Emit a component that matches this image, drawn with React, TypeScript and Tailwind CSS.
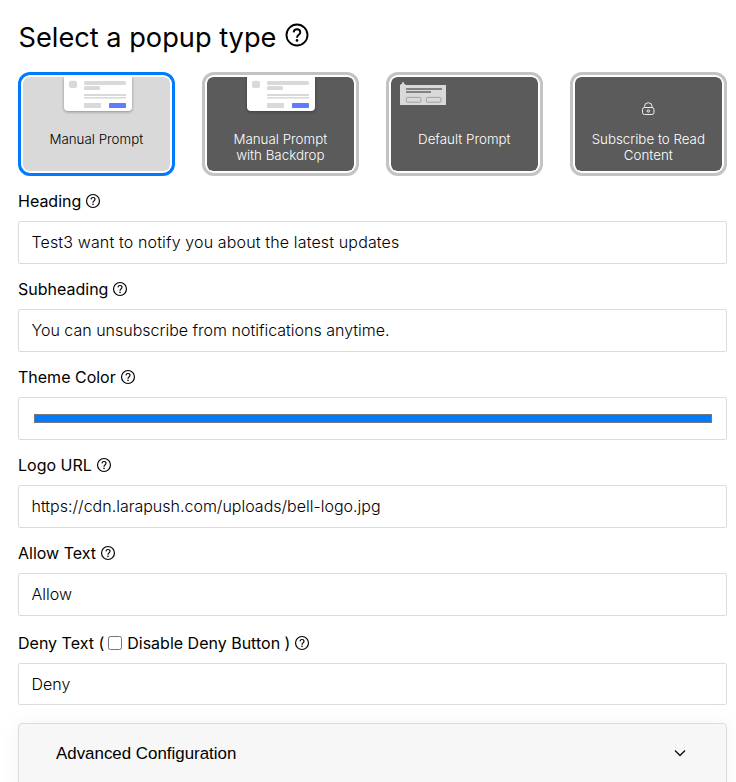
import type { ReactNode } from "react";

function HelpIcon({ className }: { className: string }) {
  return (
    <svg viewBox="0 0 24 24" className={className} fill="none" stroke="currentColor" strokeWidth="1.75">
      <circle cx="12" cy="12" r="9.7" />
      <path d="M8.9 9.6C9.1 7.7 10.3 6.7 12 6.7c1.8 0 3 1.1 3 2.7 0 2.4-3 2.5-3 5.2" />
      <circle cx="12" cy="17" r="1.2" fill="currentColor" stroke="none" />
    </svg>
  );
}

function MiniPopup({ x }: { x: number }) {
  return (
    <g transform={`translate(${x} 0)`}>
      <path d="M0 0h68v30a4 4 0 0 1-4 4H4a4 4 0 0 1-4-4z" fill="#fff" style={{ filter: "drop-shadow(0 1px 1.5px rgba(0,0,0,.35))" }} />
      <g fill="#d9d9d9">
        <rect x="5" y="3.7" width="8" height="7.3" rx="2" />
        <rect x="20" y="4" width="42" height="4" rx="1.5" />
        <rect x="20" y="9" width="16" height="4" rx="1.5" />
        <rect x="20" y="17" width="42" height="2" />
        <rect x="20" y="20" width="42" height="1.6" />
        <rect x="20" y="26" width="17" height="5" rx="0.7" />
      </g>
      <rect x="45" y="26" width="17" height="5" rx="0.7" fill="#617bff" />
    </g>
  );
}

function PromptCard({ lines, selected, children }: { lines: string[]; selected?: boolean; children: ReactNode }) {
  return (
    <button className={`h-[104px] w-[157px] rounded-[12px] border-[3px] bg-white p-[2px] ${selected ? "border-[#007bff]" : "border-[#c3c3c3]"}`}>
      <svg viewBox="0 0 147 94" className="block h-[94px] w-[147px] rounded-[6px]">
        <rect width="147" height="94" rx="6" fill={selected ? "#d9d9d9" : "#5b5b5b"} />
        {children}
        {lines.map((line, i) => (
          <text key={line} x="73.3" y={66.5 + i * 16} textAnchor="middle" className="text-[13.35px] font-light" fill={selected ? "#000" : "#fff"}>
            {line}
          </text>
        ))}
      </svg>
    </button>
  );
}

function Label({ children }: { children: ReactNode }) {
  return (
    <label className="flex h-6 items-center text-[16px] text-[#000]">
      {children}
      <HelpIcon className="ml-[4px] size-4" />
    </label>
  );
}

function Field({ label, value, tracking = "" }: { label: string; value: string; tracking?: string }) {
  return (
    <div className="flex h-[88px] flex-col gap-2">
      <Label>{label}</Label>
      <input className={`h-[43px] w-full rounded-[2px] border border-[#dcdcdc] bg-white px-[12.5px] pb-[2px] text-[16px] font-light text-[#000] outline-none ${tracking}`} defaultValue={value} />
    </div>
  );
}

export default function App() {
  return (
    <main className="h-[782px] overflow-hidden bg-white pr-[9px] pl-[18px] font-['Inter',sans-serif]">
      <h1 className="flex h-[72px] items-center pt-[5px] pl-[0.5px] text-[27.2px] text-[#000]">
        Select a popup type
        <HelpIcon className="mb-[7px] ml-[7.5px] size-[26px]" />
      </h1>
      <div className="mb-[13px] flex justify-between">
        <PromptCard lines={["Manual Prompt"]} selected>
          <MiniPopup x={41} />
        </PromptCard>
        <PromptCard lines={["Manual Prompt", "with Backdrop"]}>
          <MiniPopup x={40} />
        </PromptCard>
        <PromptCard lines={["Default Prompt"]}>
          <path d="M9 28V8l1.5 -1 1.5-2.5 1.5 2.5 1.5 1h40v20z" fill="#d9d9d9" />
          <path d="M15 12h36M15 15h25" stroke="#666" strokeWidth="1.7" />
          <g fill="none" stroke="#929292" strokeWidth="0.8">
            <rect x="15.4" y="20.4" width="14.5" height="4.8" rx="1" />
            <rect x="35.4" y="20.4" width="14.5" height="4.8" rx="1" />
          </g>
        </PromptCard>
        <PromptCard lines={["Subscribe to Read", "Content"]}>
          <g fill="none" stroke="#eee" strokeWidth="1">
            <rect x="67.5" y="30.5" width="11.5" height="7" rx="2" />
            <path d="M69.5 30.5v-1a3.8 3.8 0 0 1 7.6 0v1" />
            <circle cx="73.3" cy="34" r="1.2" />
          </g>
        </PromptCard>
      </div>
      <Field label="Heading" value="Test3 want to notify you about the latest updates" tracking="tracking-[0.14px]" />
      <Field label="Subheading" value="You can unsubscribe from notifications anytime." />
      <div className="flex h-[88px] flex-col gap-2">
        <Label>Theme Color</Label>
        <div className="flex h-[43px] items-center rounded-[2px] border border-[#dcdcdc] pr-[14px] pl-[15px]">
          <div className="h-[9px] w-full border border-[#777] bg-[#007bff]" />
        </div>
      </div>
      <Field label="Logo URL" value="https://cdn.larapush.com/uploads/bell-logo.jpg" />
      <Field label="Allow Text" value="Allow" />
      <div className="flex flex-col gap-2 pt-[2px]">
        <Label>
          <span>Deny Text (</span>
          <input type="checkbox" className="mr-[5px] ml-[4px] size-[14px]" />
          <span>Disable Deny Button )</span>
        </Label>
        <input className="h-[42px] w-full rounded-[2px] border border-[#dcdcdc] px-[12.5px] text-[16px] font-light text-[#000] outline-none" defaultValue="Deny" />
      </div>
      <div className="mt-[18px] flex h-[70px] items-start justify-between rounded-t-[4px] border border-[#dcdcdc] bg-[#f7f7f7] pt-[17px] pr-[39px] pl-[37px] font-['Liberation_Sans',Arial,sans-serif] text-[16.9px] shadow-[0_0_20px_rgba(0,0,0,0.05)]">
        Advanced Configuration
        <svg viewBox="0 0 14 14" className="mt-[5px] size-[14px]" fill="none" stroke="#111" strokeWidth="1.4">
          <path d="m2 4.5 5 5 5-5" />
        </svg>
      </div>
    </main>
  );
}
